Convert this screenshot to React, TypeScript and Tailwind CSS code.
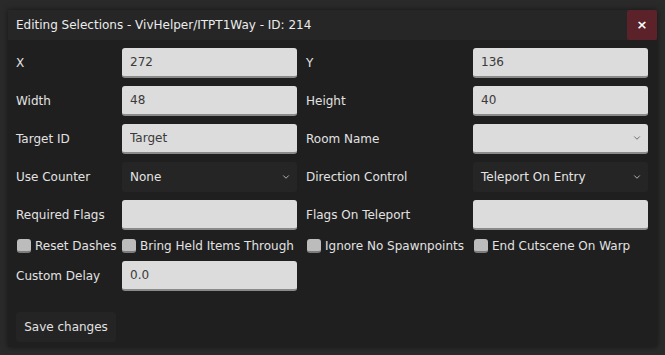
import React from "react";
import { ChevronDown } from "lucide-react";

const font = { fontFamily: '"DejaVu Sans", "Noto Sans", sans-serif' };

const TextField = ({ value }: { value: string }) => (
  <input
    type="text"
    defaultValue={value}
    className="h-[30px] w-[175px] rounded-[3px] bg-[#dcdcdc] px-2 text-[12px] text-[#3a3a3a] border-b-2 border-b-[#8a8a8a] outline-none"
  />
);

const SelectField = ({ value, light }: { value: string; light?: boolean }) => (
  <div
    className={
      light
        ? "flex h-[30px] w-[175px] items-center justify-between rounded-[3px] bg-[#dcdcdc] border-b-2 border-b-[#8a8a8a] pl-2 pr-[6px] text-[12px] text-[#3a3a3a]"
        : "flex h-[30px] w-[175px] items-center justify-between rounded-[3px] bg-[#252525] pl-2 pr-[6px] text-[12px] text-[#e4e4e4]"
    }
  >
    <span>{value}</span>
    <ChevronDown size={10} strokeWidth={2} className={light ? "text-[#555]" : "text-[#ccc]"} />
  </div>
);

const Label = ({ text, right }: { text: string; right?: boolean }) => (
  <div
    className={
      right
        ? "flex h-[30px] items-center pl-[9px] text-[12px] text-[#e2e2e2]"
        : "flex h-[30px] items-center text-[12px] text-[#e2e2e2]"
    }
  >
    {text}
  </div>
);

const Check = ({ text }: { text: string }) => (
  <label className="flex items-center gap-[4px] whitespace-nowrap text-[12px] text-[#e2e2e2]">
    <span className="h-[14px] w-[14px] shrink-0 rounded-[3px] bg-[#bcbcbc] border-b-2 border-b-[#7c7c7c]" />
    {text}
  </label>
);

export default function App() {
  return (
    <div className="h-[355px] w-[665px] bg-[#2a2a2a] pl-[8px] pt-[10px]" style={font}>
      <div className="flex h-[337px] w-[649px] flex-col bg-[#1f1f1f] shadow-[0_0_6px_rgba(0,0,0,0.5)]">
        <div className="flex h-[30px] items-center justify-between bg-[#262626]">
          <span className="pl-[8px] text-[12px] text-[#ececec]">
            Editing Selections - VivHelper/ITPT1Way - ID: 214
          </span>
          <button className="flex h-[30px] w-[30px] items-center justify-center rounded-[2px] bg-[#5c2229] text-[13px] font-bold text-white">
            ×
          </button>
        </div>
        <div className="grid grid-cols-[106px_175px_176px_175px] gap-y-[8px] pl-[8px] pt-[8px]">
          <Label text="X" />
          <TextField value="272" />
          <Label text="Y" right />
          <TextField value="136" />

          <Label text="Width" />
          <TextField value="48" />
          <Label text="Height" right />
          <TextField value="40" />

          <Label text="Target ID" />
          <TextField value="Target" />
          <Label text="Room Name" right />
          <SelectField value="" light />

          <Label text="Use Counter" />
          <SelectField value="None" />
          <Label text="Direction Control" right />
          <SelectField value="Teleport On Entry" />

          <Label text="Required Flags" />
          <TextField value="" />
          <Label text="Flags On Teleport" right />
          <TextField value="" />

          <div className="flex h-[15px] items-center pl-[1px]">
            <Check text="Reset Dashes" />
          </div>
          <div className="flex h-[15px] items-center">
            <Check text="Bring Held Items Through" />
          </div>
          <div className="flex h-[15px] items-center pl-[10px]">
            <Check text="Ignore No Spawnpoints" />
          </div>
          <div className="flex h-[15px] items-center pl-[1px]">
            <Check text="End Cutscene On Warp" />
          </div>

          <Label text="Custom Delay" />
          <TextField value="0.0" />
        </div>
        <div className="pl-[8px] pt-[21px]">
          <button className="h-[30px] w-[100px] rounded-[3px] bg-[#242424] text-[12px] text-[#e2e2e2]">
            Save changes
          </button>
        </div>
      </div>
    </div>
  );
}
